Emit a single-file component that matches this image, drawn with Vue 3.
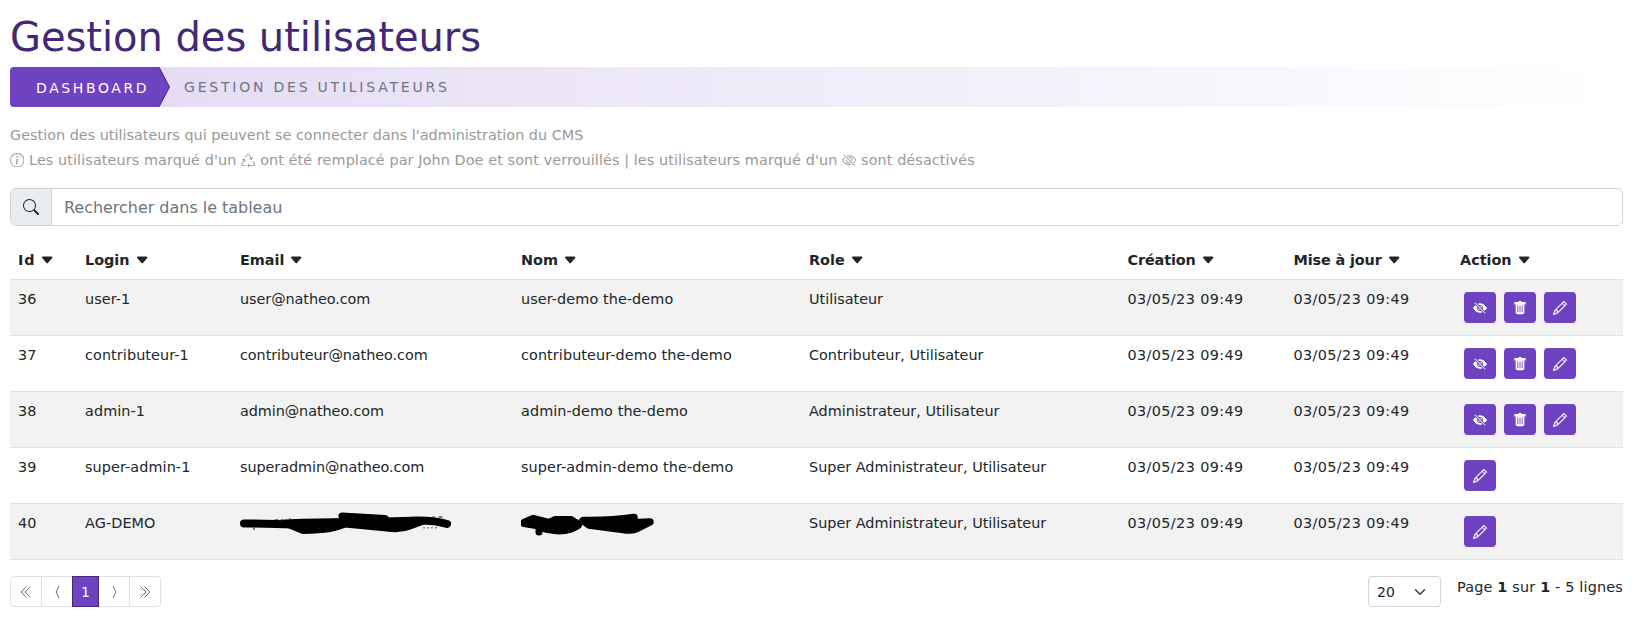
<script setup>
const icons = {
  info: ['M8 15A7 7 0 1 1 8 1a7 7 0 0 1 0 14zm0 1A8 8 0 1 0 8 0a8 8 0 0 0 0 16z', 'm8.93 6.588-2.29.287-.082.38.45.083c.294.07.352.176.288.469l-.738 3.468c-.194.897.105 1.319.808 1.319.545 0 1.178-.252 1.465-.598l.088-.416c-.2.176-.492.246-.686.246-.275 0-.375-.193-.304-.533L8.93 6.588zM9 4.5a1 1 0 1 1-2 0 1 1 0 0 1 2 0z'],
  recycle: ['M9.302 1.256a1.5 1.5 0 0 0-2.604 0l-1.704 2.98a.5.5 0 0 0 .869.497l1.703-2.981a.5.5 0 0 1 .868 0l2.54 4.444-1.256-.337a.5.5 0 1 0-.26.966l2.415.647a.5.5 0 0 0 .613-.353l.647-2.415a.5.5 0 1 0-.966-.259l-.333 1.242-2.532-4.431zM2.973 7.773l-1.255.337a.5.5 0 1 1-.26-.966l2.416-.647a.5.5 0 0 1 .612.353l.647 2.415a.5.5 0 0 1-.966.259l-.333-1.242-2.545 4.454a.5.5 0 0 0 .434.748H5a.5.5 0 0 1 0 1H1.723A1.5 1.5 0 0 1 .421 12.24l2.552-4.467zm10.89 1.463a.5.5 0 1 0-.868.496l1.716 3.004a.5.5 0 0 1-.434.748h-5.57l.647-.646a.5.5 0 1 0-.708-.707l-1.5 1.5a.498.498 0 0 0 0 .707l1.5 1.5a.5.5 0 1 0 .708-.707l-.647-.647h5.57a1.5 1.5 0 0 0 1.302-2.244l-1.716-3.004z'],
  eyeSlash: ['M13.359 11.238C15.06 9.72 16 8 16 8s-3-5.5-8-5.5a7.028 7.028 0 0 0-2.79.588l.77.771A5.944 5.944 0 0 1 8 3.5c2.12 0 3.879 1.168 5.168 2.457A13.134 13.134 0 0 1 14.828 8c-.058.087-.122.183-.195.288-.335.48-.83 1.12-1.465 1.755-.165.165-.337.328-.517.486l.708.709z', 'M11.297 9.176a3.5 3.5 0 0 0-4.474-4.474l.823.823a2.5 2.5 0 0 1 2.829 2.829l.822.822zm-2.943 1.299.822.822a3.5 3.5 0 0 1-4.474-4.474l.823.823a2.5 2.5 0 0 0 2.829 2.829z', 'M3.35 5.47c-.18.16-.353.322-.518.487A13.134 13.134 0 0 0 1.172 8l.195.288c.335.48.83 1.12 1.465 1.755C4.121 11.332 5.881 12.5 8 12.5c.716 0 1.39-.133 2.02-.36l.77.772A7.029 7.029 0 0 1 8 13.5C3 13.5 0 8 0 8s.939-1.721 2.641-3.238l.708.709zm10.296 8.884-12-12 .708-.708 12 12-.708.708z'],
  eyeFill: ['m10.79 12.912-1.614-1.615a3.5 3.5 0 0 1-4.474-4.474l-2.06-2.06C.938 6.278 0 8 0 8s3 5.5 8 5.5a7.029 7.029 0 0 0 2.79-.588zM5.21 3.088A7.028 7.028 0 0 1 8 2.5c5 0 8 5.5 8 5.5s-.939 1.721-2.641 3.238l-2.062-2.062a3.5 3.5 0 0 0-4.474-4.474L5.21 3.089z', 'M5.525 7.646a2.5 2.5 0 0 0 2.829 2.829l-2.83-2.829zm4.95.708-2.829-2.83a2.5 2.5 0 0 1 2.829 2.829zm3.171 6-12-12 .708-.708 12 12-.708.708z'],
  trash: ['M2.5 1a1 1 0 0 0-1 1v1a1 1 0 0 0 1 1H3v9a2 2 0 0 0 2 2h6a2 2 0 0 0 2-2V4h.5a1 1 0 0 0 1-1V2a1 1 0 0 0-1-1H10a1 1 0 0 0-1-1H7a1 1 0 0 0-1 1H2.5zm3 4a.5.5 0 0 1 .5.5v7a.5.5 0 0 1-1 0v-7a.5.5 0 0 1 .5-.5zM8 5a.5.5 0 0 1 .5.5v7a.5.5 0 0 1-1 0v-7A.5.5 0 0 1 8 5zm3 .5v7a.5.5 0 0 1-1 0v-7a.5.5 0 0 1 1 0z'],
  pencil: ['M12.146.146a.5.5 0 0 1 .708 0l3 3a.5.5 0 0 1 0 .708l-10 10a.5.5 0 0 1-.168.11l-5 2a.5.5 0 0 1-.65-.65l2-5a.5.5 0 0 1 .11-.168l10-10zM11.207 2.5 13.5 4.793 14.793 3.5 12.5 1.207 11.207 2.5zm1.586 3L10.5 3.207 4 9.707V10h.5a.5.5 0 0 1 .5.5v.5h.5a.5.5 0 0 1 .5.5v.5h.293l6.5-6.5zm-9.761 5.175-.106.106-1.528 3.821 3.821-1.528.106-.106A.5.5 0 0 1 5 12.5V12h-.5a.5.5 0 0 1-.5-.5V11h-.5a.5.5 0 0 1-.468-.325z'],
  search: ['M11.742 10.344a6.5 6.5 0 1 0-1.397 1.398h-.001c.03.04.062.078.098.115l3.85 3.85a1 1 0 0 0 1.415-1.414l-3.85-3.85a1.007 1.007 0 0 0-.115-.1zM12 6.5a5.5 5.5 0 1 1-11 0 5.5 5.5 0 0 1 11 0z'],
  caret: ['M7.247 11.14 2.451 5.658C1.885 5.013 2.345 4 3.204 4h9.592a1 1 0 0 1 .753 1.659l-4.796 5.48a1 1 0 0 1-1.506 0z'],
}
const columns = ['Id', 'Login', 'Email', 'Nom', 'Role', 'Création', 'Mise à jour', 'Action']
const date = '03/05/23 09:49'
const all = ['eyeFill', 'trash', 'pencil']
const rows = [
  { cells: ['36', 'user-1', 'user@natheo.com', 'user-demo the-demo', 'Utilisateur', date, date], actions: all },
  { cells: ['37', 'contributeur-1', 'contributeur@natheo.com', 'contributeur-demo the-demo', 'Contributeur, Utilisateur', date, date], actions: all },
  { cells: ['38', 'admin-1', 'admin@natheo.com', 'admin-demo the-demo', 'Administrateur, Utilisateur', date, date], actions: all },
  { cells: ['39', 'super-admin-1', 'superadmin@natheo.com', 'super-admin-demo the-demo', 'Super Administrateur, Utilisateur', date, date], actions: ['pencil'] },
  { cells: ['40', 'AG-DEMO', null, null, 'Super Administrateur, Utilisateur', date, date], actions: ['pencil'] },
]
</script>

<template>
  <main class="page">
    <h1>Gestion des utilisateurs</h1>
    <nav class="crumbs">
      <a class="crumb-home"><span>Dashboard</span></a>
      <svg class="crumb-arrow" width="11" height="40" viewBox="0 0 11 40"><path d="M0 0 10.500 20 0 40Z" fill="#6f42c1" /><path d="M0 0 10.500 20 0 40" fill="none" stroke="#432874" /></svg>
      <span class="crumb-current">Gestion des utilisateurs</span>
    </nav>
    <div class="intro">
      <p class="line1">Gestion des utilisateurs qui peuvent se connecter dans l'administration du CMS</p>
      <p class="line2">
        <svg class="ico" viewBox="0 0 16 16"><path v-for="d in icons.info" :key="d" :d="d" /></svg>
        Les utilisateurs marqué d'un
        <svg class="ico" viewBox="0 0 16 16"><path v-for="d in icons.recycle" :key="d" :d="d" /></svg>
        ont été remplacé par John Doe et sont verrouillés | les utilisateurs marqué d'un
        <svg class="ico" viewBox="0 0 16 16"><path v-for="d in icons.eyeSlash" :key="d" :d="d" /></svg>
        sont désactivés
      </p>
    </div>
    <div class="search">
      <span class="search-icon"><svg width="16" height="16" viewBox="0 0 16 16"><path v-for="d in icons.search" :key="d" :d="d" /></svg></span>
      <span class="search-text">Rechercher dans le tableau</span>
    </div>
    <div class="table">
      <div class="row head">
        <div v-for="c in columns" :key="c" class="cell" :class="{ wide: c === 'Id', tight: c.length > 7 }"><span>{{ c }}</span><svg class="caret" viewBox="0 0 16 16"><path :d="icons.caret[0]" /></svg></div>
      </div>
      <div v-for="(r, i) in rows" :key="i" class="row body" :class="{ odd: i % 2 === 0 }">
        <div v-for="(c, j) in r.cells" :key="j" class="cell" :class="{ date: j > 4, name: j === 3 || j === 1, email: j === 2 }">
          <template v-if="c">{{ c }}</template>
          <svg v-else-if="j === 2" class="scribble" width="215" height="30" viewBox="0 0 215 30">
            <path d="M4 14.500C30 14.500 50 16 70 15.500L120 12" stroke-width="8" />
            <path d="M45 14Q80 12.500 110 12.500Q100 18 90 19.500T63 21.500Z" stroke-width="7" fill="#000" />
            <path d="M102 7 145 9.500 148 12 185 11.500 170 17Q160 21 147 19L105 15Z" stroke-width="7" fill="#000" />
            <path d="M148 13Q190 9 207 15" stroke-width="8" />
            <path d="M14 19V20.500M35 11H38M41 11H43M50 9.500V10M188 9H191M193 8H194M199 8H202M184 18.500V19M188 18.500V19M192 18.500V19M196 18.500V19" stroke-width="1" />
          </svg>
          <svg v-else class="scribble" width="140" height="30" viewBox="0 0 140 30">
            <path d="M3 14 12 10Q20 12 28 14L34 11H50L57 16Q50 21 38 21.500Q25 21 15 16Z" stroke-width="8" fill="#000" />
            <path d="M18 15V23" stroke-width="7" />
            <path d="M62 11.500Q90 12 113 8.500L106 14 129 13 117 19Q112 22 102 20.500L68 16Z" stroke-width="7.500" fill="#000" />
            <path d="M55 11Q58 10 59 13" stroke-width="1" />
          </svg>
        </div>
        <div class="cell actions">
          <button v-for="a in r.actions" :key="a"><svg viewBox="0 0 16 16" :class="a"><path v-for="d in icons[a]" :key="d" :d="d" /></svg></button>
        </div>
      </div>
    </div>
    <footer>
      <div class="pager">
        <span class="first"><svg width="12" height="14" viewBox="0 0 12 14"><path d="M6.500 1.500 1 7 6.500 12.500M10.500 1.500 5 7 10.500 12.500" /></svg></span>
        <span><svg width="5" height="14" viewBox="0 0 5 14"><path d="M4 1 1 7 4 13" /></svg></span>
        <span class="current">1</span>
        <span><svg width="5" height="14" viewBox="0 0 5 14"><path d="M1 1 4 7 1 13" /></svg></span>
        <span class="last"><svg width="12" height="14" viewBox="0 0 12 14"><path d="M1.500 1.500 7 7 1.500 12.500M5.500 1.500 11 7 5.500 12.500" /></svg></span>
      </div>
      <div class="right">
        <div class="select"><span>20</span><svg width="12" height="12" viewBox="0 0 16 16"><path d="m2 5 6 6 6-6" /></svg></div>
        <div class="count">Page <b>1</b> sur <b>1</b> - 5 lignes</div>
      </div>
    </footer>
  </main>
</template>

<style>
body { margin: 0; background: #fff; }
</style>

<style scoped>
.page { box-sizing: border-box; width: 1640px; height: 633px; padding: 13px 17px 0 10px; overflow: hidden; font-family: Verdana, "DejaVu Sans", sans-serif; font-size: 14.4px; color: #212529; }
h1 { margin: 0; height: 54px; font-size: 40px; font-weight: 400; line-height: 48px; letter-spacing: -0.040px; color: #432874; white-space: nowrap; }
.crumbs { display: flex; height: 40px; border-radius: 4px; background: linear-gradient(90deg, #e2d9f3, #fff); text-transform: uppercase; font-size: 14px; letter-spacing: 2.780px; white-space: nowrap; overflow: hidden; }
.crumb-home { box-sizing: border-box; width: 149px; padding-left: 26px; line-height: 42px; letter-spacing: 2.600px; background: #6f42c1; color: #fff; }
.crumb-arrow { flex: none; }
.crumb-current { margin-left: 14px; line-height: 40px; color: #6c757d; }
.intro { height: 81px; padding-top: 16px; box-sizing: border-box; color: #999; }
.intro p { margin: 0; height: 25px; line-height: 25px; white-space: nowrap; }
.intro .line2 { letter-spacing: 0.088px; }
.ico { width: 14.400px; height: 14.400px; fill: currentColor; vertical-align: -2px; }
.search { box-sizing: border-box; display: flex; height: 38px; border: 1px solid #ced4da; border-radius: 6px; overflow: hidden; }
.search-icon { width: 40px; display: flex; align-items: center; justify-content: center; background: #e9ecef; border-right: 1px solid #ced4da; }
.search-icon svg { fill: #212529; }
.search-text { padding-left: 12px; line-height: 37px; font-size: 16px; letter-spacing: -0.030px; color: #6c757d; }
.table { margin-top: 15px; }
.row { box-sizing: border-box; display: grid; grid-template-columns: 67px 155px 281px 288px 318.500px 166px 166.500px 1fr; border-bottom: 1px solid #dee2e6; white-space: nowrap; }
.head { height: 39px; font-weight: 700; line-height: 38px; }
.body { height: 56px; line-height: 24px; }
.odd { background: #f2f2f2; }
.cell { padding: 0 8px; }
.wide span { letter-spacing: 0.900px; }
.tight span { letter-spacing: -0.120px; }
.date { letter-spacing: 0.380px; }
.name { letter-spacing: 0.090px; }
.email { letter-spacing: -0.060px; }
.body .cell { padding-top: 7px; position: relative; }
.caret { width: 14.400px; height: 14.400px; margin-left: 5px; vertical-align: -2px; fill: #212529; }
.scribble { position: absolute; left: 8px; top: 5px; fill: none; stroke: #000; stroke-linecap: round; stroke-linejoin: round; }
.body .actions { display: flex; gap: 8px; padding: 12px 0 0 12px; }
button { width: 32px; height: 31px; padding: 0; border: 0; border-radius: 4px; display: flex; align-items: center; justify-content: center; background: #6f42c1; }
button svg { width: 14px; height: 14px; fill: #fff; }
button .pencil { stroke: #fff; stroke-width: 0.400; }
footer { display: flex; justify-content: space-between; margin-top: 16px; }
.pager { display: flex; height: 31px; font-size: 14px; }
.pager span { box-sizing: border-box; width: 31px; border: 1px solid #dee2e6; border-left: 0; display: flex; align-items: center; justify-content: center; }
.pager .first { width: 32px; border-left: 1px solid #dee2e6; border-radius: 4px 0 0 4px; }
.pager .last { width: 31px; border-radius: 0 4px 4px 0; }
.pager .current { width: 27px; margin-left: -1px; border: 1px solid #432874; background: #6f42c1; color: #fff; }
.pager svg { fill: none; stroke: #6c757d; stroke-width: 1; }
.right { display: flex; gap: 16px; }
.select { box-sizing: border-box; width: 73px; height: 31px; border: 1px solid #ced4da; border-radius: 4px; padding: 0 14px 0 8px; display: flex; align-items: center; justify-content: space-between; font-size: 14px; }
.select svg { fill: none; stroke: #343a40; stroke-width: 2; stroke-linecap: round; stroke-linejoin: round; }
.count { line-height: 22px; letter-spacing: 0.180px; white-space: nowrap; }
</style>
